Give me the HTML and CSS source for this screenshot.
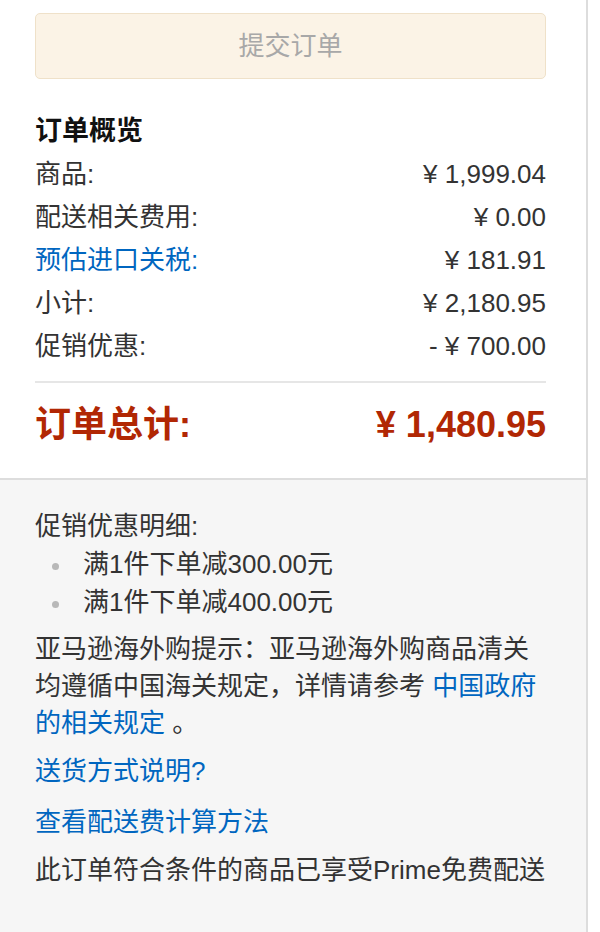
FILE: index.html
```html
<!DOCTYPE html>
<html lang="zh-CN">
<head>
<meta charset="utf-8">
<title>订单概览</title>
<link rel="stylesheet" href="styles.css">
</head>
<body>
<div class="panel">
  <section class="summary">
    <button class="submit" type="button" disabled>提交订单</button>
    <h2 class="title">订单概览</h2>
    <div class="row"><span>商品:</span><span>¥ 1,999.04</span></div>
    <div class="row"><span>配送相关费用:</span><span>¥ 0.00</span></div>
    <div class="row"><a class="link" href="#">预估进口关税:</a><span>¥ 181.91</span></div>
    <div class="row"><span>小计:</span><span>¥ 2,180.95</span></div>
    <div class="row"><span>促销优惠:</span><span>- ¥ 700.00</span></div>
    <div class="divider"></div>
    <div class="total"><span>订单总计:</span><span>¥ 1,480.95</span></div>
  </section>
  <section class="notes">
    <div class="promo-title">促销优惠明细:</div>
    <ul class="promo-list">
      <li>满1件下单减300.00元</li>
      <li>满1件下单减400.00元</li>
    </ul>
    <p class="tip">亚马逊海外购提示：亚马逊海外购商品清关均遵循中国海关规定，详情请参考 <a class="link" href="#">中国政府的相关规定</a> 。</p>
    <p class="line"><a class="link" href="#">送货方式说明?</a></p>
    <p class="line line-gap"><a class="link" href="#">查看配送费计算方法</a></p>
    <p class="line">此订单符合条件的商品已享受Prime免费配送</p>
  </section>
</div>
</body>
</html>
```
FILE: styles.css
```css
html, body {
  margin: 0;
  padding: 0;
  background: #ffffff;
}

body {
  font-family: "Liberation Sans", "Noto Sans CJK SC", sans-serif;
  color: #333333;
  font-size: 26px;
}

.panel {
  width: 586px;
  min-height: 932px;
  border-right: 2px solid #dddddd;
  background: #f6f6f6;
  display: flex;
  flex-direction: column;
}

.summary {
  background: #ffffff;
  padding: 13px 40px 23px 35px;
  border-bottom: 2px solid #dddddd;
}

.submit {
  display: block;
  width: 100%;
  height: 66px;
  margin: 0;
  padding: 0;
  border: 1px solid #efe1c9;
  border-radius: 5px;
  background: #fbf3e6;
  color: #a8a8a8;
  font-family: inherit;
  font-size: 26px;
  line-height: 64px;
  text-align: center;
}

.title {
  margin: 34px 0 4px;
  font-size: 27px;
  line-height: 36px;
  font-weight: bold;
  color: #111111;
}

.row {
  display: flex;
  justify-content: space-between;
  line-height: 43px;
  height: 43px;
}

.link {
  color: #0066c0;
  text-decoration: none;
}

.divider {
  height: 2px;
  background: #e6e6e6;
  margin-top: 13px;
}

.total {
  display: flex;
  justify-content: space-between;
  margin-top: 12px;
  line-height: 60px;
  font-size: 36px;
  font-weight: bold;
  color: #b12704;
}

.notes {
  padding: 27px 40px 30px 35px;
}

.promo-title {
  line-height: 38px;
}

.promo-list {
  margin: 0;
  padding: 0 0 0 48px;
  line-height: 38px;
  list-style: none;
}

.promo-list li::before {
  content: "";
  display: inline-block;
  width: 7px;
  height: 7px;
  border-radius: 50%;
  background: #b8b8b8;
  margin: 0 24px 0 -31px;
  vertical-align: middle;
}

.tip {
  margin: 10px 0 0;
  line-height: 37px;
}

.line {
  margin: 11px 0 0;
  line-height: 37px;
}

.line-gap {
  margin-top: 14px;
}
```
